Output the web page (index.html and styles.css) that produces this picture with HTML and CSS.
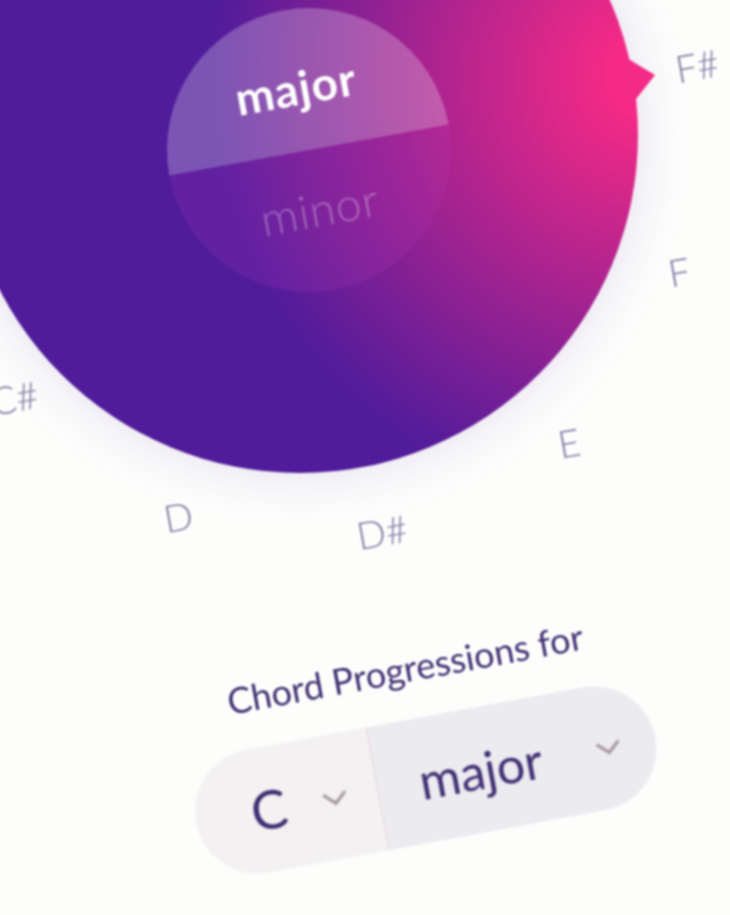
FILE: index.html
```html
<!DOCTYPE html>
<html lang="en">
<head>
<meta charset="UTF-8">
<title>Chord Progressions</title>
<link rel="stylesheet" href="styles.css">
</head>
<body>
<div class="page">
  <div class="wheel-area">
    <div class="wheel">
      <div class="mode-dial">
        <div class="mode mode-on">major</div>
        <div class="mode mode-off">minor</div>
      </div>
    </div>
    <div class="pointer"></div>
    <span class="note note-fs">F#</span>
    <span class="note note-f">F</span>
    <span class="note note-e">E</span>
    <span class="note note-ds">D#</span>
    <span class="note note-d">D</span>
    <span class="note note-cs">C#</span>
  </div>

  <div class="controls">
    <div class="controls-label">Chord Progressions for</div>
    <div class="picker">
      <div class="picker-part picker-key">
        <span class="picker-value">C</span>
        <svg class="chevron" viewBox="0 0 28 16"><path d="M2 3l12 11L26 3"/></svg>
      </div>
      <div class="picker-part picker-mode">
        <span class="picker-value">major</span>
        <svg class="chevron" viewBox="0 0 28 16"><path d="M2 3l12 11L26 3"/></svg>
      </div>
    </div>
  </div>
</div>
</body>
</html>
```
FILE: styles.css
```css
html, body {margin: 0; padding: 0; overflow: hidden; height: 100%;}
body {background: #fdfefc; color: #3f2e72; font-family: 'Lato', sans-serif;}
.page {height: 915px; filter: blur(0.9px);}

.wheel-area {position: relative; height: 650px;}
.wheel {
  position: absolute; left: -38px; top: -203px; width: 676px; height: 676px; border-radius: 50%;
  background: radial-gradient(circle at 688px 278px, #f52a86 40px, #501c9b 440px);
  box-shadow: 0 0 60px rgba(80, 28, 155, 0.14);
}
.pointer {
  position: absolute; left: 620px; top: 54px; width: 36px; height: 46px;
  background: #f32a86; clip-path: polygon(5px 3px, 35px 21px, 16px 45px, 0 45px);
}
.mode-dial {
  position: absolute; left: 205px; top: 211px; width: 284px; height: 284px; border-radius: 50%;
  overflow: hidden; transform: rotate(-10.3deg);
  display: flex; flex-direction: column;
}
.mode {flex: 1; box-sizing: border-box; display: flex; justify-content: center; align-items: center; letter-spacing: 1px;}
.mode-on {flex: none; height: 142px; background: rgba(255, 255, 255, 0.25); color: #fff; font-size: 46px; font-weight: 700; padding: 14px 4px 0 0;}
.mode-off {background: rgba(190, 60, 190, 0.16); color: rgba(255, 255, 255, 0.3); font-size: 46px; font-weight: 300; padding: 0 0 24px 0;}

.note {position: absolute; font-size: 38px; font-weight: 300; line-height: 1; color: #7f7aa3; transform: translate(-50%, -50%) rotate(-10deg);}
.note-fs {left: 697px; top: 65px;}
.note-f {left: 679px; top: 271px;}
.note-e {left: 569px; top: 442px;}
.note-ds {left: 382px; top: 531px;}
.note-d {left: 178px; top: 516px;}
.note-cs {left: 14px; top: 397px;}

.controls {
  width: 467px; margin-left: 186px; transform: rotate(-10.5deg);
  display: flex; flex-direction: column; align-items: center; gap: 31px;
}
.controls-label {font-size: 36px; line-height: 40px; white-space: nowrap; margin-top: -3px;}
.picker {display: flex; width: 100%; height: 125px; border-radius: 63px; overflow: hidden;}
.picker-part {display: flex; align-items: center; box-sizing: border-box;}
.picker-key {width: 185px; background: #f3f1f2; border-right: 1px solid #ead5d6; padding-left: 56px; gap: 36px;}
.picker-mode {flex: 1; background: #ecebf0; padding-left: 42px; gap: 54px;}
.picker-value {font-size: 50px; line-height: 1;}
.picker-key .picker-value {font-size: 54px;}
.chevron {width: 26px; height: 15px; margin-top: 2px; flex: none;}
.chevron path {fill: none; stroke: #a89a9f; stroke-width: 3.5;}
```
